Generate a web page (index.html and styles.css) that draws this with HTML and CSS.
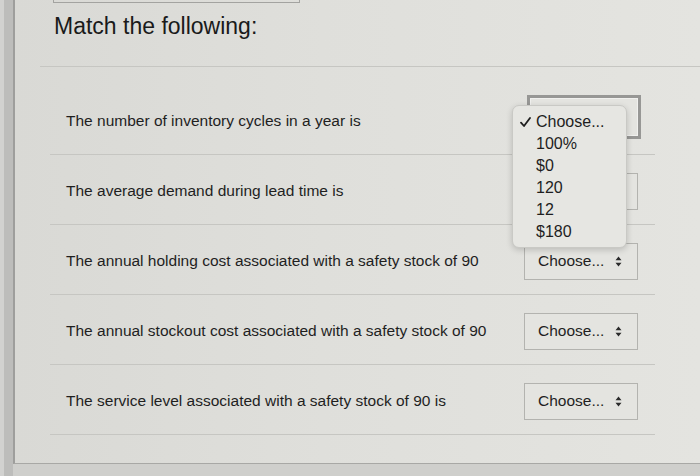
FILE: index.html
```html
<!DOCTYPE html>
<html>
<head>
<meta charset="utf-8">
<link rel="stylesheet" href="styles.css">
</head>
<body>
<div class="page">
  <div class="card">
    <div class="stub"></div>
    <div class="head">
      <h2 class="title">Match the following:</h2>
    </div>
    <div class="rows">
      <div class="row">
        <div class="q">The number of inventory cycles in a year is</div>
        <div class="select focused">
          <div class="menu">
            <div class="item checked"><svg class="check" width="11" height="10" viewBox="0 0 11 10"><path d="M1 5.6 L4 9 L10 1" fill="none" stroke="#1e1e1e" stroke-width="1.8" stroke-linecap="round" stroke-linejoin="round"/></svg>Choose...</div>
            <div class="item">100%</div>
            <div class="item">$0</div>
            <div class="item">120</div>
            <div class="item">12</div>
            <div class="item">$180</div>
          </div>
        </div>
      </div>
      <div class="row">
        <div class="q">The average demand during lead time is</div>
        <div class="select"></div>
      </div>
      <div class="row">
        <div class="q">The annual holding cost associated with a safety stock of 90</div>
        <div class="select">
          <span class="label">Choose...</span>
          <svg class="arrows" width="7" height="11" viewBox="0 0 7 11"><path d="M0.5 4.3 L3.5 0.5 L6.5 4.3 Z M0.5 6.7 L3.5 10.5 L6.5 6.7 Z" fill="#2b2b2b"/></svg>
        </div>
      </div>
      <div class="row">
        <div class="q">The annual stockout cost associated with a safety stock of 90</div>
        <div class="select">
          <span class="label">Choose...</span>
          <svg class="arrows" width="7" height="11" viewBox="0 0 7 11"><path d="M0.5 4.3 L3.5 0.5 L6.5 4.3 Z M0.5 6.7 L3.5 10.5 L6.5 6.7 Z" fill="#2b2b2b"/></svg>
        </div>
      </div>
      <div class="row">
        <div class="q">The service level associated with a safety stock of 90 is</div>
        <div class="select">
          <span class="label">Choose...</span>
          <svg class="arrows" width="7" height="11" viewBox="0 0 7 11"><path d="M0.5 4.3 L3.5 0.5 L6.5 4.3 Z M0.5 6.7 L3.5 10.5 L6.5 6.7 Z" fill="#2b2b2b"/></svg>
        </div>
      </div>
    </div>
  </div>
</div>
</body>
</html>
```

FILE: styles.css
```css
html, body {
  margin: 0;
  padding: 0;
}
body {
  width: 700px;
  height: 476px;
  overflow: hidden;
  font-family: "Liberation Sans", Arial, sans-serif;
  color: #1f1f1f;
  background: #cfcfcc;
}
.page {
  height: 476px;
  padding-left: 13px;
  background: linear-gradient(to right, #d2d2d0 0, #d2d2d0 4px, #bdbdbb 4px, #bdbdbb 13px, #cfcfcc 13px);
  box-sizing: border-box;
}
.card {
  height: 464px;
  box-sizing: border-box;
  border-left: 2px solid #9e9e9c;
  border-bottom: 1px solid #a8a8a5;
  background: linear-gradient(to right, #d9d9d5 0%, #dfdfdb 45%, #e4e4e0 100%);
}
.stub {
  width: 245px;
  height: 2px;
  margin-left: 38px;
  border: 1px solid #a3a3a0;
  border-top: none;
}
.head {
  margin-left: 25px;
  padding: 9px 0 26px 14px;
  border-bottom: 1px solid #c6c6c2;
}
.title {
  margin: 0;
  font-size: 23px;
  line-height: 28px;
  font-weight: normal;
  color: #1a1a1a;
}
.rows {
  margin-left: 35px;
  width: 605px;
  padding-top: 18px;
}
.row {
  display: grid;
  grid-template-columns: 458px 114px;
  align-items: center;
  height: 66px;
  padding: 3px 0 0 16px;
  border-bottom: 1px solid #c6c6c2;
}
.q {
  font-size: 15.5px;
  line-height: 20px;
}
.select {
  position: relative;
  height: 37px;
  box-sizing: border-box;
  border: 1px solid #b3b3af;
  background: #e4e4e0;
  display: flex;
  align-items: center;
  padding-left: 13px;
  gap: 11px;
}
.select.focused {
  margin: 0 0 8px 6px;
  height: 38px;
  outline: 3px solid #979795;
  border-color: #f0f0ee;
}
.label {
  font-size: 15.5px;
}
.arrows {
  display: block;
}
.menu {
  position: absolute;
  left: -19px;
  top: 6px;
  width: 115px;
  box-sizing: border-box;
  padding: 5px 0 4px;
  background: #e6e6e2;
  border: 1px solid #c9c9c5;
  border-radius: 7px;
  box-shadow: 0 2px 6px rgba(0, 0, 0, 0.18);
  z-index: 2;
}
.item {
  position: relative;
  font-size: 16px;
  line-height: 22px;
  padding-left: 23px;
  color: #1e1e1e;
}
.check {
  position: absolute;
  left: 7px;
  top: 6px;
}
```
